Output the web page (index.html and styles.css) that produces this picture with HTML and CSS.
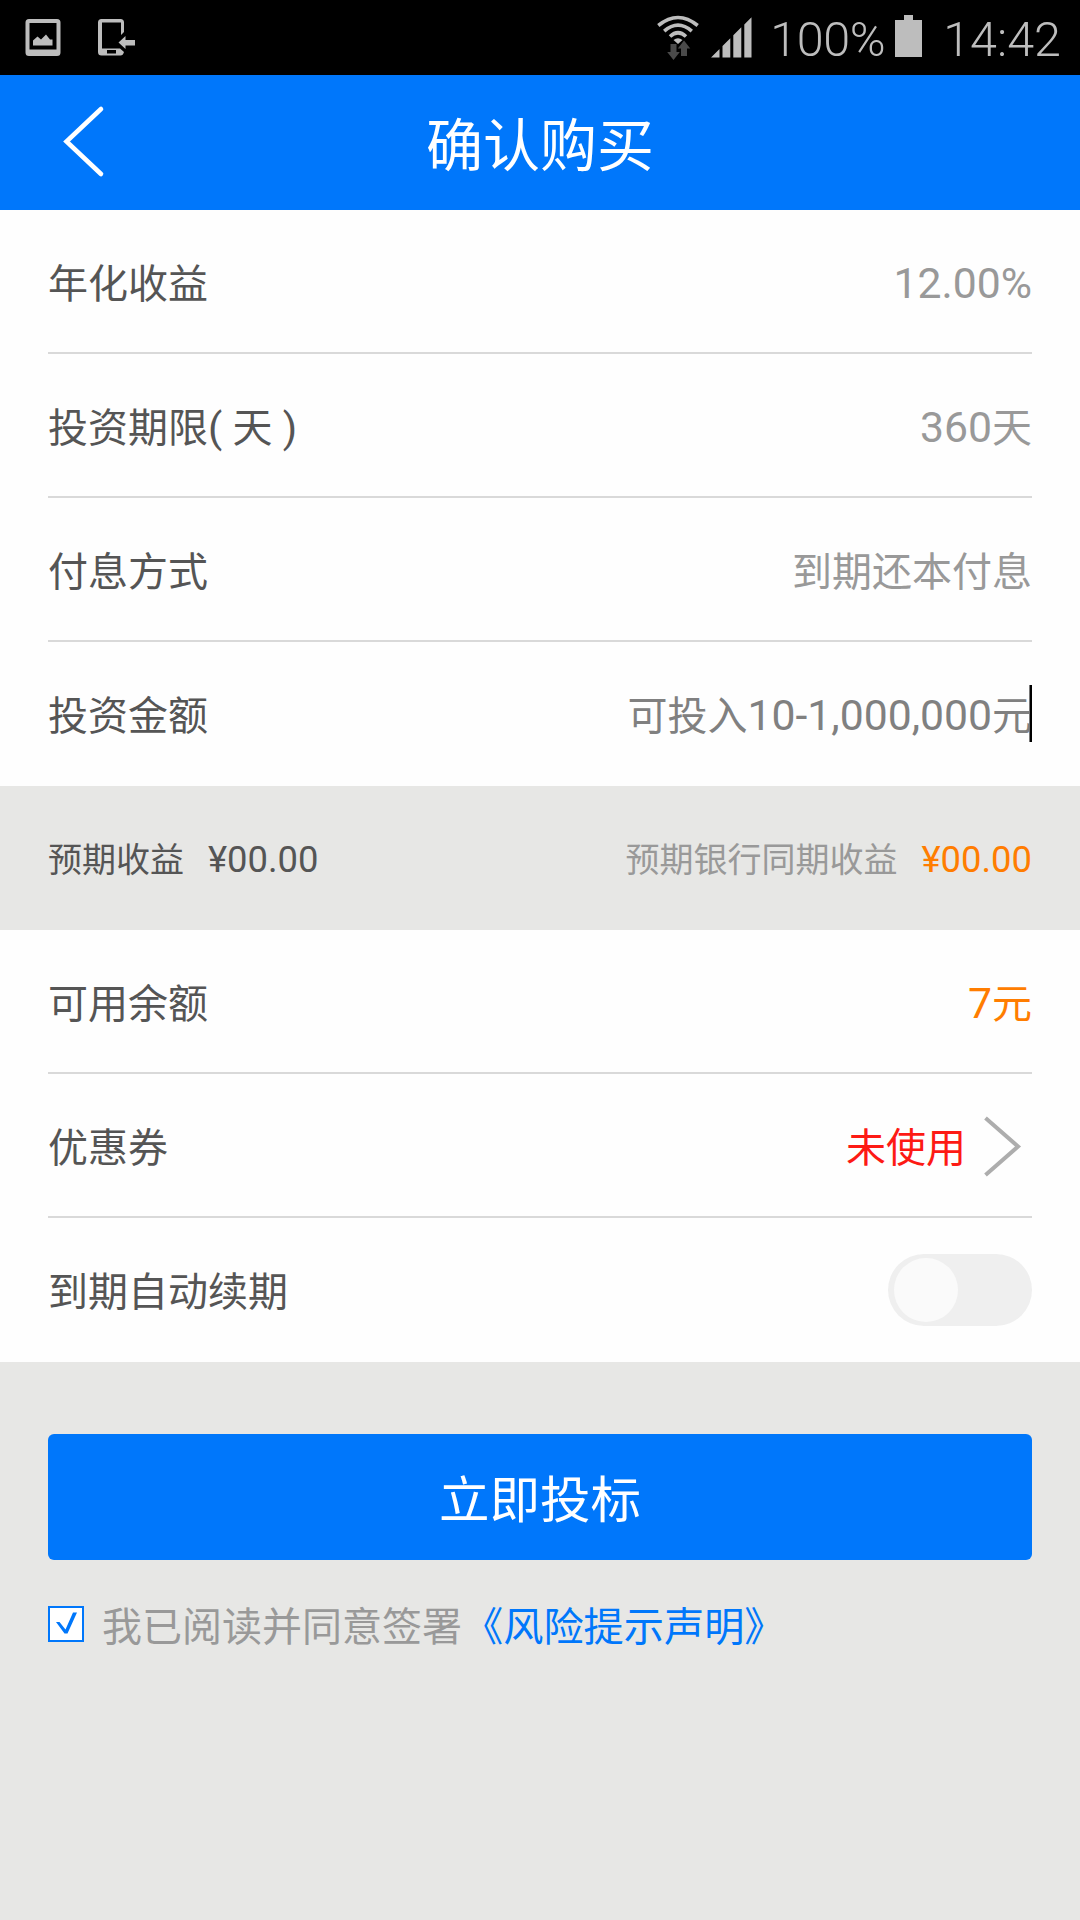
FILE: index.html
```html
<!DOCTYPE html>
<html lang="zh-CN">
<head>
<meta charset="utf-8">
<title>确认购买</title>
<link rel="stylesheet" href="styles.css">
</head>
<body>
<div class="status-bar">
  <div class="status-left">
    <svg class="icon-picture" width="36" height="40" viewBox="0 0 36 40"><path fill="#bdbdbd" fill-rule="evenodd" d="M4 1H32Q35.500 1 35.500 4.500V34.500Q35.500 38 32 38H4Q.5 38 .5 34.500V4.500Q.5 1 4 1ZM4.500 5V31.500H31.500V5ZM8 27.500V22.500L12.500 18.500L16 21.500L21 16.500L25 21.500H27.500V27.500Z"/></svg>
    <svg class="icon-phone" width="38" height="40" viewBox="0 0 38 40"><path fill="#bdbdbd" fill-rule="evenodd" d="M3.500 1H22.500Q26 1 26 4.500V14L23 17V4.500H4V30.500H22L26 34Q25 37.500 22.500 37.500H3.500Q0 37.500 0 34V4.500Q0 1 3.500 1ZM9 32V35.500H18V32Z"/><path fill="#bdbdbd" d="M20.500 24.500L27.500 18V22H37V27.500H27.500V31Z"/></svg>
  </div>
  <div class="status-right">
    <svg class="icon-wifi" width="42" height="46" viewBox="0 0 42 46"><g fill="none" stroke="#bdbdbd" stroke-width="3.600"><path d="M1.300 10.500Q21-5.500 40.700 10.500"/><path d="M7.200 16.200Q21 4.200 34.800 16.200"/><path d="M13 21.500Q21 14 29 21.500"/></g><path fill="#bdbdbd" d="M16.500 25Q21 21.500 25.500 25L21 29Z"/><path fill="#4a4a4a" d="M13.500 29H19.500V37H22.800L16.500 45L10.200 37H13.500ZM24 41V33.500H20.800L27 25.500L33.300 33.500H30V41Z"/></svg>
    <svg class="icon-signal" width="41" height="41" viewBox="0 0 41 41"><path fill="#bdbdbd" d="M0 40.500L8.500 32V40.500ZM11.500 29L19.300 21.200V40.500H11.500ZM22.300 18.200L30.300 10.200V40.500H22.300ZM33.300 7.500L40.500 .3V40.500H33.300Z"/></svg>
    <span class="battery-level">100%</span>
    <svg class="icon-battery" width="27" height="42" viewBox="0 0 27 42"><path fill="#bdbdbd" d="M9 0H18V5H27V42H0V5H9Z"/></svg>
    <span class="clock">14:42</span>
  </div>
</div>
<header class="header">
  <svg class="back" width="48" height="80" viewBox="0 0 48 80"><path d="M43 8L8.500 40.500L43 73" fill="none" stroke="#fff" stroke-width="4.600" stroke-linecap="round"/></svg>
  <h1 class="title">确认购买</h1>
</header>
<main>
  <section class="panel">
    <div class="row"><span class="label">年化收益</span><span class="value"><span class="num">12.00%</span></span></div>
    <div class="row"><span class="label">投资期限<span class="num">( </span>天<span class="num"> )</span></span><span class="value"><span class="num">360</span>天</span></div>
    <div class="row"><span class="label">付息方式</span><span class="value">到期还本付息</span></div>
    <div class="row"><span class="label">投资金额</span><span class="value hint">可投入<span class="num">10-1,000,000</span>元<i class="caret"></i></span></div>
  </section>
  <section class="summary">
    <div class="expected">预期收益<span class="amount">¥00.00</span></div>
    <div class="bank">预期银行同期收益<span class="amount orange">¥00.00</span></div>
  </section>
  <section class="panel">
    <div class="row"><span class="label">可用余额</span><span class="value orange"><span class="num">7</span>元</span></div>
    <div class="row"><span class="label">优惠券</span><span class="value red">未使用</span><svg class="chevron" width="40" height="64" viewBox="0 0 40 64"><path d="M1.500 3L34 31.500L1.500 60" fill="none" stroke="#adadad" stroke-width="4"/></svg></div>
    <div class="row"><span class="label">到期自动续期</span><span class="switch"><span class="knob"></span></span></div>
  </section>
  <button class="submit"><span class="submit-text">立即投标</span></button>
  <div class="agreement">
    <span class="checkbox"><svg width="32" height="32" viewBox="0 0 32 32"><path d="M6 14H9.500L15.500 21.500L23 4.500H27L17.500 25.500H14.500Z" fill="#0077fb"/></svg></span>
    <span class="agree-text">我已阅读并同意签署</span><a class="agree-link">《风险提示声明》</a>
  </div>
</main>
</body>
</html>
```
FILE: styles.css
```css
* { box-sizing: border-box; }
body {
  margin: 0;
  width: 1080px;
  height: 1920px;
  overflow: hidden;
  background: #e7e7e5;
  color: #555;
  font: 40px/60px Roboto, "Noto Sans CJK SC", sans-serif;
}
svg { display: block; flex: none; }

.status-bar {
  height: 75px;
  display: flex;
  justify-content: space-between;
  align-items: flex-start;
  padding: 0 19px 0 25px;
  background: #000;
  color: #bdbdbd;
}
.status-left { display: flex; gap: 37px; padding-top: 18px; }
.status-right { display: flex; align-items: flex-start; font-size: 48.500px; font-weight: 300; line-height: 60px; white-space: nowrap; }
.icon-wifi { margin-top: 15px; margin-right: 12px; }
.icon-signal { margin-top: 17px; }
.battery-level { width: 114px; margin: 10px 11px 0 18px; letter-spacing: -.4px; }
.icon-battery { margin-top: 15px; margin-right: 21px; }
.clock { margin-top: 10px; }

.header {
  height: 135px;
  display: grid;
  grid-template-columns: 112px 1fr 112px;
  background: #0077fb;
  color: #fff;
}
.back { margin: 26px 0 0 58px; }
.title { margin: 32px 0 0; font-size: 57px; font-weight: 400; line-height: 80px; text-align: center; }

.panel { padding: 0 48px; background: #fefefe; }
.row { height: 144px; display: flex; align-items: center; border-bottom: 2px solid #d9d9d9; }
.row:last-child { border-bottom: 0; }
.label { flex: 1; padding-top: 7px; }
.row:last-child .label, .row:last-child .value { padding-top: 5px; }
.value { padding-top: 7px; color: #999; }
.num { font-size: 42.700px; line-height: 1; }
.label .num { font-size: 41.500px; }
.hint { position: relative; color: #808080; }
.caret { position: absolute; right: 0; top: 3px; width: 3px; height: 57px; background: linear-gradient(90deg, #777 1px, #000 1px); }
.orange { color: #ff7d00; }
.red { color: #fd1a14; }
.chevron { margin: 3px 8px 0 18px; }

.switch { width: 144px; height: 72px; padding: 4px 6px; border-radius: 36px; background: #efefef; }
.knob { display: block; width: 64px; height: 64px; border-radius: 50%; background: #fafafa; }

.summary { height: 144px; padding: 3px 48px 0; display: flex; justify-content: space-between; align-items: center; font-size: 34px; }
.bank { color: #999; }
.amount { margin-left: 24px; font-size: 36.400px; line-height: 1; }

.submit {
  display: block;
  width: 984px;
  height: 126px;
  margin: 72px 48px 0;
  padding: 7px 0 0;
  border: 0;
  border-radius: 6px;
  background: #0077fb;
  color: #fff;
  font: 50.500px/80px Roboto, "Noto Sans CJK SC", sans-serif;
}
.agreement { display: flex; align-items: center; height: 60px; margin: 34px 48px 0; color: #999; }
.checkbox { width: 36px; height: 36px; margin-right: 18px; border: 2px solid #0077fb; background: #fff; }
.agree-text, .agree-link { padding-top: 8px; }
.agree-link { margin-left: 1px; color: #0077fb; font-size: 40.200px; }
```
